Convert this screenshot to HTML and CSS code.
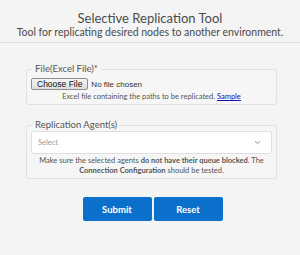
FILE: index.html
```html
<!DOCTYPE html>
<html lang="en">
<head>
  <meta charset="UTF-8" />
  <meta name="viewport" content="width=device-width, initial-scale=1.0" />
  <title>Selective Replication Tool</title>
  <link rel="stylesheet" href="styles.css">
</head>
<body>
  <header class="page-header">
    <h1 class="page-title">Selective Replication Tool</h1>
    <p class="page-subtitle">Tool for replicating desired nodes to another environment.</p>
  </header>

  <form class="replication-form">
    <fieldset class="form-group">
      <legend>File(Excel File)*</legend>
      <input type="file" class="file-input" name="paths">
      <div class="field-hint">Excel file containing the paths to be replicated. <a href="#">Sample</a></div>
    </fieldset>

    <fieldset class="form-group agents">
      <legend>Replication Agent(s)</legend>
      <div class="select-box">
        <span class="select-placeholder">Select</span>
        <svg class="select-arrow" width="7" height="5" viewBox="0 0 7 5">
          <path d="M1 1.2 L3.5 3.6 L6 1.2" fill="none" stroke="#8a8a8a" stroke-width="1"/>
        </svg>
      </div>
      <div class="field-hint">Make sure the selected agents <b>do not have their queue blocked</b>. The <b>Connection Configuration</b> should be tested.</div>
    </fieldset>

    <div class="form-actions">
      <button type="submit" class="btn">Submit</button>
      <button type="reset" class="btn">Reset</button>
    </div>
  </form>
</body>
</html>
```

FILE: styles.css
```css
:root {
  --bg: #f4f4f4;
  --text: #4b4b4b;
  --border: #e1e1e1;
  --blue: #0b6fcc;
}

body {
  margin: 0;
  background: var(--bg);
  color: var(--text);
  font-family: 'Lato', 'Open Sans', sans-serif;
}

.page-header {
  text-align: center;
  padding-top: 10px;
  height: 32px;
  border-bottom: 1px solid #dcdcdc;
}

.page-title {
  margin: 0;
  font-size: 13px;
  font-weight: normal;
  line-height: 16px;
}

.page-subtitle {
  margin: 0;
  font-size: 10.5px;
  line-height: 12px;
}

.replication-form {
  margin: 21px 23px 0 26px;
}

.form-group {
  margin: 0;
  padding: 4px 4px 2px;
  border: 1px solid var(--border);
  border-radius: 3px;
  background: #f6f6f6;
}

.form-group legend {
  margin-left: 1px;
  padding: 0 3px;
  font-size: 9.5px;
  line-height: 10px;
  color: #555;
}

.form-group.agents {
  margin-top: 15px;
  padding-top: 1px;
}

.file-input {
  display: block;
  font-family: 'Liberation Sans', Arial, sans-serif;
  font-size: 8px;
  color: #333;
}

.file-input::file-selector-button {
  font-family: 'Liberation Sans', Arial, sans-serif;
  font-size: 8.5px;
  height: 12px;
  padding: 0 5px;
  margin-right: 3px;
  border: 1px solid #8f8f8f;
  border-radius: 2px;
  background: linear-gradient(#f6f6f6, #dddddd);
  color: #111;
}

.field-hint {
  margin-top: 2px;
  text-align: center;
  font-size: 7.5px;
  line-height: 10px;
  color: #555;
}

.field-hint a {
  color: #1a0dab;
}

.select-box {
  display: flex;
  align-items: center;
  justify-content: space-between;
  height: 21px;
  padding: 0 10px 0 6px;
  background: #fff;
  border: 1px solid #dedede;
  border-radius: 3px;
}

.select-placeholder {
  font-size: 7.5px;
  color: #9a9a9a;
}

.form-actions {
  display: flex;
  justify-content: center;
  gap: 2px;
  margin-top: 18px;
  padding-left: 2px;
}

.btn {
  width: 69px;
  height: 24px;
  border: none;
  border-radius: 2px;
  background: var(--blue);
  color: #fff;
  font-family: 'Lato', 'Open Sans', sans-serif;
  font-weight: bold;
  font-size: 9.5px;
}
```
